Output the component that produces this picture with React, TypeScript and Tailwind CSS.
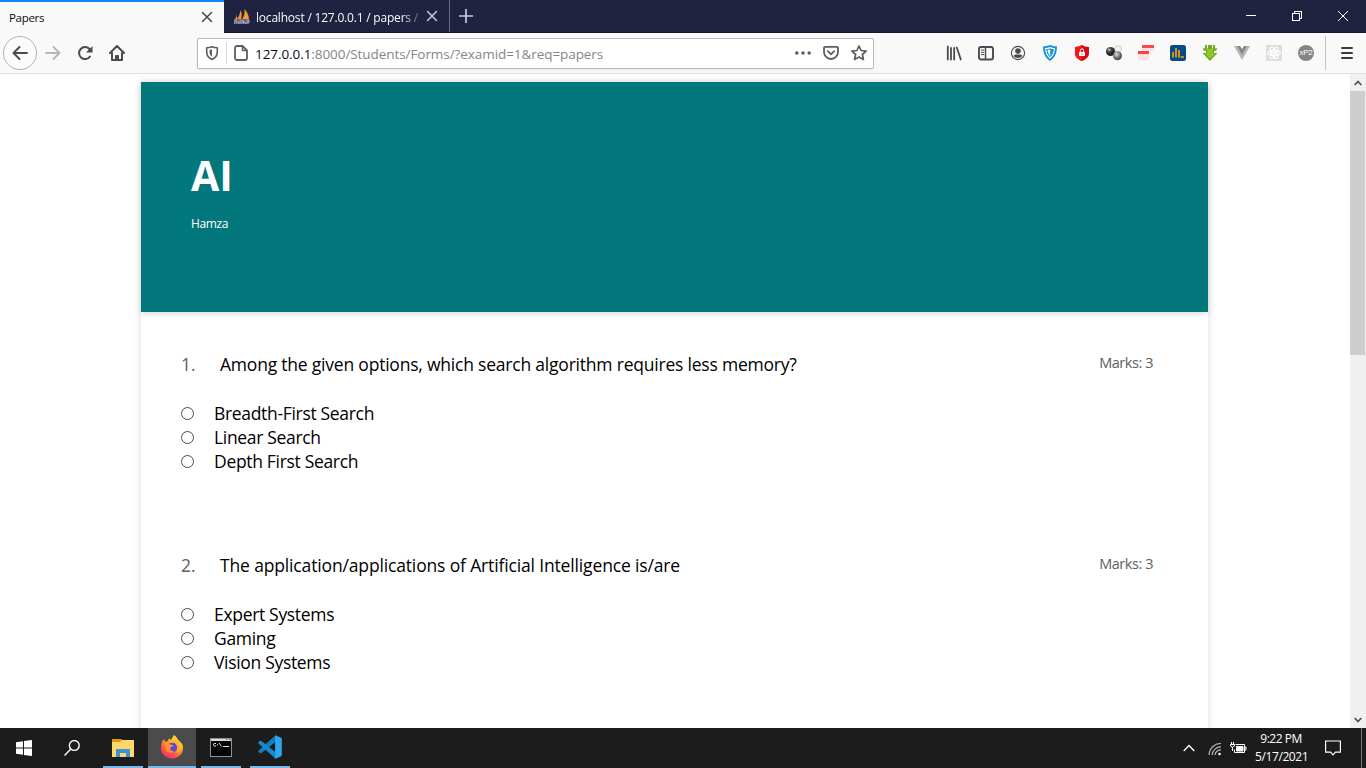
import React from "react";

type Question = { n: number; text: string; marks: number; options: string[]; spacing: string };

const questions: Question[] = [
  {
    n: 1,
    text: "Among the given options, which search algorithm requires less memory?",
    marks: 3,
    options: ["Breadth-First Search", "Linear Search", "Depth First Search"],
    spacing: "tracking-[-0.21px]",
  },
  {
    n: 2,
    text: "The application/applications of Artificial Intelligence is/are",
    marks: 3,
    options: ["Expert Systems", "Gaming", "Vision Systems"],
    spacing: "tracking-[-0.15px]",
  },
];

function Cross({ className }: { className: string }) {
  return (
    <svg viewBox="0 0 12 12" className={className} fill="none" stroke="currentColor" strokeWidth="1.5" strokeLinecap="round">
      <path d="M1.5 1.5l9 9M10.500 1.500l-9 9" />
    </svg>
  );
}

function Sails() {
  return (
    <svg viewBox="0 0 16 16" className="h-4 w-4">
      <path d="M6.500 1c1.500 3 1.500 6 .5 9.500H2.500c2-2 3.500-5 4-9.500z" fill="#f79421" />
      <path d="M10.500 0c2.500 3 4.500 6 4.500 10.500H8c2-3 3-6 2.500-10.500z" fill="#f99a2c" />
      <path d="M3 4.500C3 7 2 9 0 11h3z" fill="#c99a78" />
      <path d="M0 10.500h16l-1 4.500H1z" fill="#62638a" />
      <path d="M.5 15v-3.500h2V14M2.500 13h2v2M6 15v-4h2.500v2.500H6M9.500 11v4M9.500 13.500h2V15M13 15v-4h2v2.500h-2" stroke="#a9a9bf" strokeWidth=".8" fill="none" />
    </svg>
  );
}

function TabBar() {
  return (
    <div className="flex h-[33px] shrink-0 border-b border-[#15162e] bg-[#202340] text-[12px] text-[#f9f9fa]">
      <div className="-mb-px flex w-[224px] items-center justify-between border-t-2 border-[#0a84ff] bg-[#f9f9fa] pr-[11px] pl-[9px] text-[#0c0c0d]">
        <span className="text-[11.500px] tracking-[-0.3px]">Papers</span>
        <Cross className="mb-[2px] h-3 w-3 text-[#47474a]" />
      </div>
      <div className="flex w-[226px] items-center border-r border-[#6b6c80] pt-[2px] pl-[10px]">
        <Sails />
        <span className="ml-[6px] flex w-[166px] pt-px text-[12px] tracking-[-0.2px] whitespace-nowrap [mask-image:linear-gradient(to_right,#000_146px,transparent_168px)]">
          localhost / 127.0.0.1 / papers / e
        </span>
        <Cross className="mb-[2px] ml-[4px] h-3 w-3 shrink-0 text-[#c9cad4]" />
      </div>
      <svg viewBox="0 0 16 16" className="mt-2 ml-2 h-4 w-4" stroke="#c9cad4" strokeWidth="1.700">
        <path d="M8 1v14M1 8h14" />
      </svg>
      <div className="ml-auto flex h-8 items-center text-white">
        <div className="flex w-[46px] justify-center">
          <svg viewBox="0 0 10 10" className="h-[10px] w-[10px]" shapeRendering="crispEdges"><path d="M0 4h10v1H0z" fill="white" /></svg>
        </div>
        <div className="flex w-[46px] justify-center">
          <svg viewBox="0 0 10 10" className="h-[10px] w-[10px]" fill="none" stroke="white" shapeRendering="crispEdges">
            <path d="M.5 2.500h7v7h-7zM2.500 2.500v-2h7v7h-2" />
          </svg>
        </div>
        <div className="flex w-[46px] justify-center">
          <svg viewBox="0 0 10 10" className="h-[10px] w-[10px]" stroke="white"><path d="M0 0l10 10M10 0L0 10" /></svg>
        </div>
      </div>
    </div>
  );
}

function BackIcon() {
  return (
    <svg viewBox="0 0 16 16" className="h-4 w-4" fill="none" stroke="currentColor" strokeWidth="2" strokeLinecap="round" strokeLinejoin="round">
      <path d="M15 8H1.500M7.500 2L1.500 8l6 6" />
    </svg>
  );
}

function Extensions() {
  const slot = "flex w-8 shrink-0 justify-center";
  return (
    <div className="flex h-full items-center text-[#4a4a4f]">
      <div className={slot}>
        <svg viewBox="0 0 16 16" className="h-4 w-4" fill="none" stroke="currentColor" strokeWidth="1.800" strokeLinecap="round">
          <path d="M1.800 1.500v13M5 3v11.500M8.200 3v11.500M10.800 2.500l4 12" />
        </svg>
      </div>
      <div className={slot}>
        <svg viewBox="0 0 16 16" className="h-4 w-4" fill="none" stroke="currentColor">
          <rect x="1" y="2" width="14" height="12.500" rx="2" strokeWidth="1.900" />
          <path d="M7.500 2v12.500" strokeWidth="1.500" />
          <path d="M3 5h3M3 7.300h3M3 9.600h3" />
        </svg>
      </div>
      <div className={slot}>
        <svg viewBox="0 0 16 16" className="h-4 w-4">
          <circle cx="8" cy="8" r="6.600" fill="none" stroke="currentColor" strokeWidth="1.100" />
          <circle cx="8" cy="6" r="2.800" fill="currentColor" />
          <path d="M3.500 11c1-1.800 2.400-1.500 4.500-1.500s3.500-.3 4.500 1.500c-2 2.600-7 2.600-9 0z" fill="currentColor" />
        </svg>
      </div>
      <div className={slot}>
        <svg viewBox="0 0 16 16" className="h-4 w-4">
          <path d="M8 0c2.500 1 4.500 1.300 7 1.300C15 8 13 13 8 16 3 13 1 8 1 1.300 3.500 1.300 5.500 1 8 0z" fill="#1b95d8" />
          <path d="M8 2c2 .7 3 1 5 1-.3 5-2 8.500-5 10.700C5 11.500 3.300 8 3 3c2 0 3-.3 5-1z" fill="#fff" />
          <path d="M8 3.300c1.500.6 2.500.8 3.900.8C11.500 8 10 10.700 8 12.300 6 10.700 4.500 8 4.100 4.100c1.400 0 2.400-.2 3.900-.8z" fill="#1b95d8" />
          <path d="M8.200 4.500V11C6.600 9.400 5.800 7.500 5.500 5.100z" fill="#fff" />
        </svg>
      </div>
      <div className={slot}>
        <svg viewBox="0 0 16 16" className="h-4 w-4">
          <path d="M8 0c2 1.300 4 2 7 2v6c0 4-3 6.500-7 8-4-1.500-7-4-7-8V2c3 0 5-.7 7-2z" fill="#d90a14" />
          <path d="M8 0v16c-4-1.500-7-4-7-8V2c3 0 5-.7 7-2z" fill="#fa1515" />
          <rect x="5" y="7" width="6" height="4" rx=".5" fill="#fff" />
          <path d="M6.400 7V5.400a1.600 1.600 0 013.200 0V7" stroke="#fff" fill="none" strokeWidth="1" />
          <path d="M8 8.300v1.400" stroke="#e50914" strokeWidth=".8" />
        </svg>
      </div>
      <div className={slot}>
        <svg viewBox="0 0 16 16" className="h-4 w-4">
          <defs>
            <radialGradient id="dark" cx=".35" cy=".3"><stop offset="0" stopColor="#ddd" /><stop offset=".4" stopColor="#555" /><stop offset="1" stopColor="#222" /></radialGradient>
            <radialGradient id="mid" cx=".4" cy=".35"><stop offset="0" stopColor="#ddd" /><stop offset="1" stopColor="#555" /></radialGradient>
            <radialGradient id="pale"><stop offset="0" stopColor="#fff" /><stop offset="1" stopColor="#d9d9d9" /></radialGradient>
          </defs>
          <circle cx="12" cy="4" r="4" fill="url(#pale)" />
          <circle cx="4.500" cy="6.500" r="4.500" fill="url(#dark)" />
          <circle cx="11.500" cy="10.700" r="4.500" fill="url(#mid)" />
        </svg>
      </div>
      <div className={slot}>
        <svg viewBox="0 0 16 16" className="h-4 w-4" shapeRendering="crispEdges">
          <path d="M4 3h12v3H4zM0 9h11v6H0z" fill="#ffe0e0" />
          <path d="M4 0h12v3H4z" fill="#ff4a4a" />
          <path d="M0 6h11v3H0z" fill="#ff4040" />
        </svg>
      </div>
      <div className={slot}>
        <svg viewBox="0 0 16 16" className="h-4 w-4">
          <rect width="16" height="16" rx="2.500" fill="#064b87" />
          <path d="M3 7v5.500M6 3v9.500M9 5v7.500M10.500 12H14" stroke="#f5a20b" strokeWidth="1.700" />
        </svg>
      </div>
      <div className={slot}>
        <svg viewBox="0 0 16 16" className="h-4 w-4">
          <path d="M3 0h2v3.500h1V0h4v3.500h1V0h2v3.500l2-.5-.5 2.500-2.500.5v2h3.500L8 16 .5 8H4V6l-2.500-.5L1 3l2 .5z" fill="#70a91a" />
          <path d="M5 4h6v5h2L8 14 3 9h2z" fill="#8cc52c" />
        </svg>
      </div>
      <div className={slot}>
        <svg viewBox="0 0 16 16" className="h-4 w-4">
          <path d="M0 1h6l2 3.500L10 1h6L8 15z" fill="#b5b5b5" />
          <path d="M3.200 1H6l2 3.500L10 1h2.800L8 9.500z" fill="#858585" />
        </svg>
      </div>
      <div className={slot}>
        <svg viewBox="0 0 16 16" className="h-4 w-4" fill="none" stroke="#fff" strokeWidth="1.100">
          <path d="M0 0h16v16H0z" fill="#dedede" stroke="none" />
          <ellipse cx="8" cy="8" rx="6.300" ry="2.600" />
          <ellipse cx="8" cy="8" rx="6.300" ry="2.600" transform="rotate(60 8 8)" />
          <ellipse cx="8" cy="8" rx="6.300" ry="2.600" transform="rotate(120 8 8)" />
          <circle cx="8" cy="8" r="1" fill="#fff" />
        </svg>
      </div>
      <div className={slot}>
        <div className="flex h-4 w-4 items-center justify-center rounded-full bg-[#858585] font-['Liberation_Sans',sans-serif] text-[8px] tracking-[-0.2px] text-white">xP2</div>
      </div>
    </div>
  );
}

function Toolbar() {
  return (
    <div className="flex h-[41px] shrink-0 items-center border-b border-[#e0e0e1] bg-[#f9f9fa] text-[#4a4a4f]">
      <div className="ml-[3px] flex h-[34px] w-[34px] items-center justify-center rounded-full border border-[#b1b1b3] bg-[#fbfbfb]">
        <BackIcon />
      </div>
      <div className="ml-2 rotate-180 text-[#b8b8ba]"><BackIcon /></div>
      <svg viewBox="0 0 16 16" className="ml-4 h-4 w-4" fill="none" stroke="currentColor" strokeWidth="2" strokeLinecap="round">
        <path d="M13 11.500A6 6 0 1 1 12.500 4" />
        <path d="M15.500 1v6.500H9z" fill="currentColor" stroke="none" />
      </svg>
      <svg viewBox="0 0 16 16" className="ml-4 h-4 w-4" fill="none" stroke="currentColor" strokeWidth="2" strokeLinecap="round" strokeLinejoin="round">
        <path d="M1 8l7-7 7 7M3 8v7h10V8" />
        <path d="M6.500 15v-4.500h3V15z" fill="currentColor" strokeWidth="1" />
      </svg>
      <div className="ml-[72px] flex h-[31px] w-[677px] items-center rounded-[2px] border border-[#b9b9bb] bg-white shadow-[0_1px_3px_rgba(0,0,0,0.06)]">
        <svg viewBox="0 0 16 16" className="ml-[6px] h-4 w-4" fill="none" stroke="#5e5e62" strokeWidth="1.600" strokeLinejoin="round">
          <path d="M8 1.700c2 .8 3.500 1 5.300 1V7c0 3.600-2 6-5.300 7.500C4.700 13 2.700 10.600 2.700 7V2.700c1.800 0 3.300-.2 5.300-1z" />
          <path d="M8 4.500v7C6.500 10.500 5.500 9 5.500 7V5z" fill="#5e5e62" stroke="none" />
        </svg>
        <div className="ml-[6px] h-[22px] w-px bg-[#d7d7db]" />
        <svg viewBox="0 0 16 16" className="ml-[6px] h-4 w-4" fill="none" stroke="#5e5e62" strokeWidth="1.800" strokeLinejoin="round">
          <path d="M4 1h5.500L14 5.500V13a2 2 0 0 1-2 2H4a2 2 0 0 1-2-2V3a2 2 0 0 1 2-2z" />
          <path d="M9.500 1v4.500H14" strokeWidth="1.500" />
        </svg>
        <span className="ml-[6px] pt-[3px] text-[13.500px] tracking-[-0.07px] whitespace-nowrap text-[#858587]"><span className="text-[#0c0c0d]">127.0.0.1</span>:8000/Students/Forms/?examid=1&amp;req=papers</span>
        <svg viewBox="0 0 16 16" className="mr-3 ml-auto h-4 w-4 shrink-0" fill="#5e5e62">
          <circle cx="1.800" cy="8" r="1.800" /><circle cx="8" cy="8" r="1.800" /><circle cx="14.200" cy="8" r="1.800" />
        </svg>
        <svg viewBox="0 0 16 16" className="mr-3 h-4 w-4 shrink-0" fill="none" stroke="#5e5e62" strokeWidth="1.800" strokeLinecap="round" strokeLinejoin="round">
          <path d="M2 1.800h12a1 1 0 0 1 1 1V7A7 7 0 0 1 1 7V2.800a1 1 0 0 1 1-1z" />
          <path d="M4.800 6.200L8 9.300l3.200-3.100" />
        </svg>
        <svg viewBox="0 0 16 16" className="mr-[6px] h-4 w-4 shrink-0" fill="none" stroke="#5e5e62" strokeWidth="1.700" strokeLinejoin="round">
          <path d="M8 1l2.100 4.500 5 .6-3.700 3.400 1 5L8 12l-4.400 2.500 1-5L.9 6.100l5-.6z" />
        </svg>
      </div>
      <div className="ml-[64px] flex h-full items-center"><Extensions /></div>
      <div className="ml-[3px] h-[34px] w-px bg-[#c4c4c6]" />
      <svg viewBox="0 0 12 12" className="ml-[15px] h-3 w-3" stroke="#3c3c3f" strokeWidth="2" strokeLinecap="round"><path d="M1 1h10M1 6h10M1 11h10" /></svg>
    </div>
  );
}

function QuestionBlock({ q }: { q: Question }) {
  return (
    <section className="h-[201px] pr-[55px] pl-[40px]">
      <div className="flex h-[30px] text-[17.500px] leading-[28px]">
        <span className="w-[39px] text-[#605e5c]">{q.n}.</span>
        <span className={`whitespace-nowrap text-black ${q.spacing}`}>{q.text}</span>
        <span className="ml-auto text-[14.500px] leading-[25px] tracking-[-0.45px] text-[#605e5c]">Marks: {q.marks}</span>
      </div>
      <div className="mt-[21px]">
        {q.options.map((option) => (
          <label key={option} className="flex h-6 items-center text-[17.500px] tracking-[-0.32px] text-black">
            <input type="radio" name={`q${q.n}`} className="mr-[20px] h-[13px] w-[13px] appearance-none rounded-full border border-[#4b4b4b] bg-white" />
            <span>{option}</span>
          </label>
        ))}
      </div>
    </section>
  );
}

function Taskbar() {
  return (
    <div className="flex h-10 shrink-0 bg-[#1d1c1c] text-white">
      <div className="flex w-12 items-center justify-center">
        <svg viewBox="0 0 16 16" className="h-4 w-4" fill="#fff"><path d="M0 2.200L7 1.200v6.300H0zM8 1l8-1v7.500H8zM0 8.500h7v6.300L0 13.800zM8 8.500h8V16l-8-1z" /></svg>
      </div>
      <div className="flex w-12 items-center justify-center">
        <svg viewBox="0 0 16 16" className="h-4 w-4" fill="none" stroke="#fff" strokeWidth="1.400"><circle cx="10.300" cy="5.500" r="4.900" /><path d="M6.800 9L.5 15.500" /></svg>
      </div>
      <div className="ml-[7px] flex w-10 items-center justify-center border-b-2 border-[#76b9ed] pt-px">
        <svg viewBox="0 0 22 18" className="h-[18px] w-[22px]">
          <path d="M0 0h9l1 1h12v17H0z" fill="#ffd668" />
          <path d="M0 0h9v3H0z" fill="#dc9a12" />
          <path d="M4 18v-7q0-1 1-1h12q1 0 1 1v7h-4v-4H8v4z" fill="#3a93d9" />
        </svg>
      </div>
      <div className="ml-[5px] flex w-12 items-center justify-center border-b-2 border-[#76b9ed] bg-[#4c4b4b]">
        <svg viewBox="0 0 24 24" className="h-6 w-6">
          <defs>
            <linearGradient id="flame" x1=".8" y1="0" x2=".2" y2="1">
              <stop offset="0" stopColor="#fff13f" /><stop offset=".35" stopColor="#ffb32a" /><stop offset=".65" stopColor="#ff633d" /><stop offset="1" stopColor="#f52378" />
            </linearGradient>
          </defs>
          <path d="M14 0c3 2 3.500 4 4 5 1 .4 2 1.200 2.300 2.300C22 8 23 10 23 13c0 6-5 10.500-11 10.500S1 19 1 13C1 9 2 6 4 4l1 2.700 3-.7 1-3 1.500 2C12 4 12.500 2 14 0z" fill="url(#flame)" />
          <circle cx="12.300" cy="12.500" r="4.800" fill="#6a45d2" />
          <path d="M4.500 8.500c3-1 5 0 5.500 1l3 .5c0 2-2.500 2-3 3-.5 2 1.500 3.500 4 2.800-1.500 3-6.500 2.500-8-.8-.8-2-.3-4-1.500-6.500z" fill="#ff942c" />
          <path d="M12 7.800c3-1.300 6 .5 6.500 3 .7 3-1 6-3 7 4 0 6-3.500 5-7.500-.6-2.500-2.500-4.300-4.500-5.300z" fill="#ffb52c" />
        </svg>
      </div>
      <div className="ml-[5px] flex w-10 items-center justify-center border-b-2 border-[#76b9ed]">
        <svg viewBox="0 0 22 19" className="h-[19px] w-[22px]">
          <path d="M0 0h22v19H0z" fill="#8b9298" /><path d="M1 1h20v2H1z" fill="#d8dcde" /><path d="M1 3h20v15H1z" fill="#050505" />
          <path d="M16 1h1.500v1H16zM19 1h1.500v1H19z" fill="#647078" />
          <path d="M6 5.500H4.500q-1 0-1 1.200T4.500 8H6M7.500 6v.7M7.500 7.500V8M9 5l2.500 3.500M13 8.500h6" fill="none" stroke="#fff" strokeWidth=".9" />
        </svg>
      </div>
      <div className="ml-[9px] flex w-10 items-center justify-center border-b-2 border-[#76b9ed]">
        <svg viewBox="0 0 24 24" className="h-6 w-6">
          <path d="M18 6.500L3.200 18.200Q2.500 18.600 1.900 18L.6 16.900q-.7-.7 0-1.400L17.500.3z" fill="#137dbf" />
          <path d="M18 17.500L3.200 5.800Q2.500 5.400 1.900 6L.6 7.100q-.7.700 0 1.400l16.900 15.200z" fill="#1688ce" />
          <path d="M17.500.2L23 2.700q.8.400.8 1.200v16.200q0 .8-.8 1.200l-5.500 2.500q-.4-.3-.4-1V1.500q0-1 .4-1.300z" fill="#2ca8ef" />
        </svg>
      </div>
      <div className="ml-auto flex items-center">
        <svg viewBox="0 0 12 8" className="h-2 w-3" fill="none" stroke="#fff" strokeWidth="1.300"><path d="M.7 7L6 1.500 11.300 7" /></svg>
        <svg viewBox="0 0 14 14" className="mt-[2px] ml-[13px] h-[14px] w-[14px]" fill="none" stroke="#b5b5b5" strokeWidth="1.200">
          <path d="M1.200 13A11.300 11.300 0 0 1 13 1.500M4.200 13A8.500 8.500 0 0 1 13 4.800M7 13a5.500 5.500 0 0 1 6-5" />
          <circle cx="11.500" cy="12" r="1.300" fill="#fff" stroke="none" />
        </svg>
        <svg viewBox="0 0 17 12" className="ml-[8px] h-3 w-[17px]" fill="none" stroke="#fff">
          <path d="M5.500 2.500h9v8H4.500V7.500M15 5h1v3h-1" /><path d="M6.500 4.500h6.500v4.500H6.500z" fill="#fff" />
          <path d="M1.500 0v2.500M3.500 0v2.500M.5 2.500h4v1.500q-2 2.500-4 0zM2.500 5v4" />
        </svg>
        <div className="ml-[8px] w-[52px] text-center text-[12px] leading-[18px] tracking-[-0.5px] whitespace-nowrap">
          <div>9:22 PM</div>
          <div className="tracking-[-0.4px]">5/17/2021</div>
        </div>
        <svg viewBox="0 0 16 16" className="ml-[18px] h-4 w-4" fill="none" stroke="#fff" strokeWidth="1.200"><path d="M.6 1h14.800v11.200h-5L8 14.800l-2.400-2.600h-5z" /></svg>
        <div className="ml-[20px] h-10 w-px bg-[#777]" />
        <div className="w-1" />
      </div>
    </div>
  );
}

export default function App() {
  return (
    <div className="flex h-[768px] w-[1366px] flex-col overflow-hidden bg-white font-['Open_Sans','Noto_Sans',sans-serif]">
      <TabBar />
      <Toolbar />
      <div className="flex min-h-0 flex-1">
        <main className="min-w-0 flex-1 overflow-hidden pt-2 pl-[141px]">
          <div className="h-[900px] w-[1067px] shadow-[0_0_8px_rgba(0,0,0,0.13)]">
            <header className="h-[230px] bg-[#03787c] px-[50px] pt-[66px] text-white shadow-[0_2px_6px_rgba(0,0,0,0.14)]">
              <h1 className="text-[41px] leading-[54px] font-bold">AI</h1>
              <p className="mt-[13px] text-[12px] leading-[18px] tracking-[-0.35px]">Hamza</p>
            </header>
            <div className="pt-[38px]">
              {questions.map((q) => <QuestionBlock key={q.n} q={q} />)}
            </div>
          </div>
        </main>
        <div className="flex w-[16px] flex-col items-start justify-between bg-[#f0f0f0]">
          <div>
            <div className="flex h-[17px] w-[15px] items-center justify-center">
              <svg viewBox="0 0 8 6" className="h-[6px] w-2" fill="none" stroke="#505050" strokeWidth="1.800"><path d="M.7 5L4 1.500 7.300 5" /></svg>
            </div>
            <div className="h-[264px] w-[15px] bg-[#cdcdcd]" />
          </div>
          <div className="flex h-[17px] w-[15px] items-center justify-center">
            <svg viewBox="0 0 8 6" className="h-[6px] w-2" fill="none" stroke="#505050" strokeWidth="1.800"><path d="M.7 1L4 4.500 7.300 1" /></svg>
          </div>
        </div>
      </div>
      <Taskbar />
    </div>
  );
}
